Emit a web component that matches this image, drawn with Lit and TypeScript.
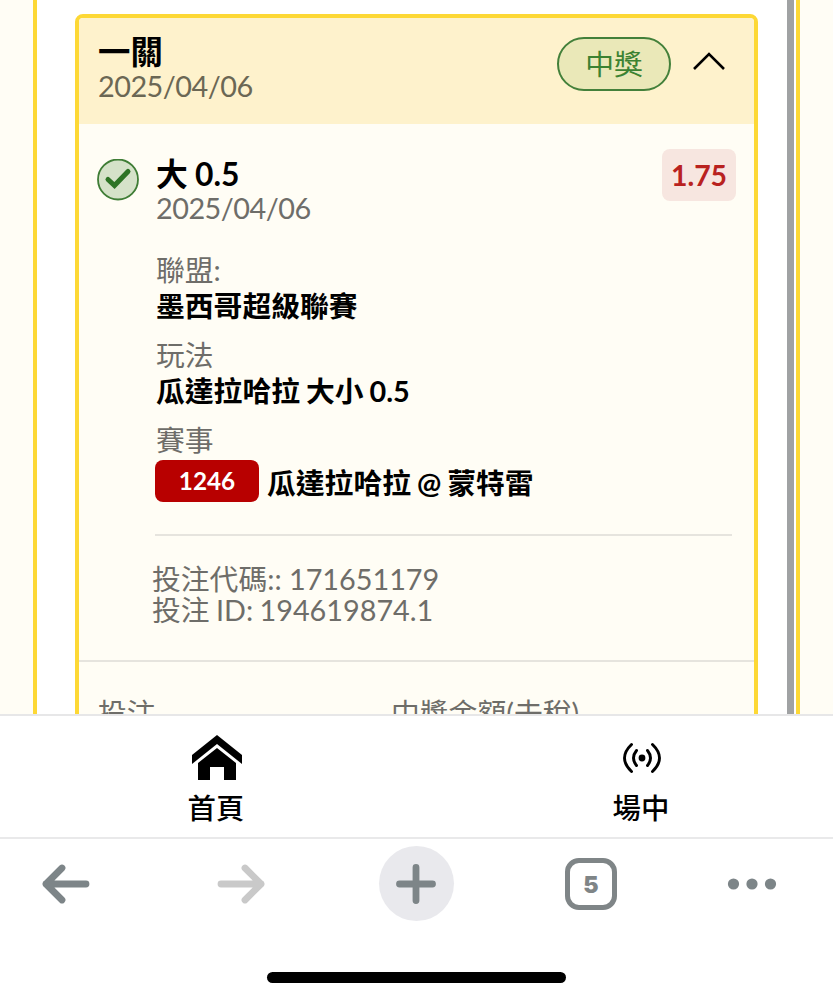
import { LitElement, html, css, svg, nothing } from 'lit';
import { customElement, property } from 'lit/decorators.js';

interface Detail {
  label: string;
  value: string;
  code?: string;
}

const details: Detail[] = [
  { label: '聯盟:', value: '墨西哥超級聯賽' },
  { label: '玩法', value: '瓜達拉哈拉 大小 0.5' },
  { label: '賽事', value: '瓜達拉哈拉 @ 蒙特雷', code: '1246' },
];

const homeIcon = svg`
  <path d="M26 0 51 20V29L26 9 1 29V20Z" />
  <path d="M26 13 45 28V45H33V32H19V45H7V28Z" />
`;

const liveIcon = svg`
  <circle cx="26" cy="23" r="3.4" />
  <g fill="none" stroke="#000" stroke-width="2.9" stroke-linecap="round">
    <path d="M20.5 15.5Q14.5 23 20.5 30.5M31.5 15.5Q37.5 23 31.5 30.5" />
    <path d="M15.5 9.5Q1.5 23 15.5 36.5M36.5 9.5Q50.5 23 36.5 36.5" />
  </g>
`;

@customElement('bet-card')
export class BetCard extends LitElement {
  static styles = css`
    :host {
      display: block;
      box-sizing: border-box;
      height: 760px;
      border: 4px solid #fdd835;
      border-radius: 8px;
      background: #fffdf5;
      overflow: hidden;
      font-size: 28.8px;
      line-height: 36px;
      color: #000;
    }

    header {
      display: flex;
      align-items: flex-start;
      box-sizing: border-box;
      height: 106px;
      padding: 16px 28px 0 19px;
      background: #fef2cc;
    }

    .grow {
      flex: 1;
    }

    .title {
      font-size: 32.4px;
      font-weight: 700;
      word-spacing: -0.5px;
    }

    .date {
      line-height: 32px;
      letter-spacing: -0.5px;
      color: #6b6754;
    }

    .leg .title {
      font-size: 31.8px;
    }

    .leg .date,
    .label,
    .codes,
    footer {
      color: #6e6d69;
    }

    .pill {
      box-sizing: border-box;
      width: 114px;
      height: 54px;
      margin-top: 3px;
      border: 2px solid #43803a;
      border-radius: 27px;
      background: #eae8b8;
      color: #3c8232;
      line-height: 50px;
      text-align: center;
    }

    .chevron {
      width: 34px;
      height: 20px;
      margin: 17px 0 0 21px;
    }

    .leg {
      display: flex;
      align-items: flex-start;
      padding: 32px 18px 0;
    }

    .check {
      width: 42px;
      height: 42px;
      margin: 3px 17px 0 0;
    }

    .odds {
      width: 74px;
      height: 52px;
      margin-top: -7px;
      border-radius: 8px;
      background: #f7e6e0;
      color: #b9221f;
      font-size: 28.4px;
      font-weight: 700;
      line-height: 52px;
      text-align: center;
    }

    .details {
      display: flex;
      flex-direction: column;
      gap: 13px;
      margin: 28px 22px 0 76px;
      padding-bottom: 32px;
      border-bottom: 2px solid #e6e4de;
    }

    .label,
    .value {
      padding-left: 1px;
    }

    .value {
      display: flex;
      align-items: center;
      font-weight: 700;
      word-spacing: -1px;
    }

    .code {
      width: 104px;
      margin: 2px 8px 0 -1px;
      border-radius: 8px;
      background: #b80000;
      color: #fff;
      font-size: 24.3px;
      line-height: 42px;
      text-align: center;
    }

    .code + .name {
      padding-top: 5px;
    }

    .codes {
      padding: 28px 0 34px 73px;
      line-height: 31.2px;
      border-bottom: 2px solid #e6e4de;
    }

    .bet-id {
      word-spacing: -1px;
    }

    footer {
      display: grid;
      grid-template-columns: 293px 1fr;
      padding: 33px 19px 0;
    }
  `;

  render() {
    return html`
      <header>
        <div class="grow">
          <div class="title">一關</div>
          <div class="date">2025/04/06</div>
        </div>
        <div class="pill">中獎</div>
        <svg class="chevron" viewBox="0 0 34 20">
          <path d="M2 18 17 3 32 18" fill="none" stroke="#000" stroke-width="2.6" />
        </svg>
      </header>
      <div class="leg">
        <svg class="check" viewBox="0 0 42 42">
          <circle cx="21" cy="20.5" r="20" fill="#d5e2c9" stroke="#3f7d36" stroke-width="1.8" />
          <path
            d="M11 20.5 17.5 26.5 31 12.5"
            fill="none"
            stroke="#2e7426"
            stroke-width="5"
            stroke-linecap="round"
          />
        </svg>
        <div class="grow">
          <div class="title">大 0.5</div>
          <div class="date">2025/04/06</div>
        </div>
        <div class="odds">1.75</div>
      </div>
      <div class="details">
        ${details.map(
          (item) => html`
            <div>
              <div class="label">${item.label}</div>
              <div class="value">
                ${item.code ? html`<span class="code">${item.code}</span>` : nothing}
                <span class="name">${item.value}</span>
              </div>
            </div>
          `
        )}
      </div>
      <div class="codes">
        <div>投注代碼:: 171651179</div>
        <div class="bet-id">投注 ID: 194619874.1</div>
      </div>
      <footer>
        <span>投注</span>
        <span>中獎金額(去稅)</span>
      </footer>
    `;
  }
}

@customElement('tab-item')
export class TabItem extends LitElement {
  static styles = css`
    :host {
      display: flex;
      flex-direction: column;
      align-items: center;
      font-size: 28.4px;
      line-height: 36px;
      font-weight: 500;
      color: #000;
    }

    svg {
      width: 52px;
      height: 46px;
      margin-bottom: 9px;
    }

    span {
      padding-right: 2px;
    }
  `;

  @property() label = '';
  @property({ attribute: false }) icon: unknown;

  render() {
    return html`
      <svg viewBox="0 0 52 46">${this.icon}</svg>
      <span>${this.label}</span>
    `;
  }
}

@customElement('browser-bar')
export class BrowserBar extends LitElement {
  static styles = css`
    :host {
      display: flex;
      flex-direction: column;
      align-items: center;
      justify-content: space-between;
      box-sizing: border-box;
      height: 163px;
      padding: 7px 0 17px;
      border-top: 2px solid #e9e9ea;
      background: #fff;
    }

    .buttons {
      display: flex;
      align-items: center;
      gap: 125.5px;
      box-sizing: border-box;
      width: 100%;
      height: 75px;
      padding-left: 40.5px;
    }

    svg {
      display: block;
      flex: none;
      fill: none;
      stroke: #7d8588;
      stroke-width: 6.8;
      stroke-linecap: round;
      stroke-linejoin: round;
    }

    .forward {
      stroke: #c9c9c9;
    }

    .plus {
      flex: none;
      display: grid;
      place-items: center;
      width: 75px;
      height: 75px;
      margin: 0 -13px;
      border-radius: 50%;
      background: #e9e9ed;
    }

    .tabs {
      flex: none;
      box-sizing: border-box;
      width: 52px;
      height: 52px;
      margin-left: -1px;
      border: 5.5px solid #7f8587;
      border-radius: 14px;
      color: #7f8587;
      font: 900 23px/44px Inter, sans-serif;
      text-align: center;
    }

    .more {
      margin-left: -16px;
      fill: #7d8588;
      stroke: none;
    }

    .home {
      width: 299px;
      height: 11px;
      border-radius: 6px;
      background: #000;
    }
  `;

  render() {
    return html`
      <div class="buttons">
        <svg width="50" height="42"><path d="M45 21H5M21 5 5 21 21 37" /></svg>
        <svg class="forward" width="50" height="42"><path d="M5 21H45M29 5 45 21 29 37" /></svg>
        <div class="plus">
          <svg width="42" height="42"><path d="M21 4.5V37.5M4.5 21H37.5" /></svg>
        </div>
        <div class="tabs">5</div>
        <svg class="more" width="50" height="42">
          <circle cx="6.5" cy="21" r="5.6" />
          <circle cx="25" cy="21" r="5.6" />
          <circle cx="43.5" cy="21" r="5.6" />
        </svg>
      </div>
      <div class="home"></div>
    `;
  }
}

@customElement('app-root')
export class AppRoot extends LitElement {
  static styles = css`
    :host {
      display: flex;
      flex-direction: column;
      height: 1000px;
      overflow: hidden;
      background: #fff;
      font-family: Lato, 'Noto Sans CJK TC', sans-serif;
    }

    main {
      display: flex;
      box-sizing: border-box;
      height: 714px;
      padding: 0 33px;
      background: #fffdf5;
      overflow: hidden;
    }

    .panel {
      flex: 1;
      display: flex;
      box-sizing: border-box;
      padding: 14px 2px 0 38px;
      border: solid #fdd835;
      border-width: 0 4px;
      background: #fff;
    }

    bet-card {
      width: 683px;
      flex: none;
    }

    .scrollbar {
      width: 7px;
      margin: -14px 0 0 29px;
      background: #a0a2a3;
    }

    nav {
      display: grid;
      grid-template-columns: 425px 425px;
      box-sizing: border-box;
      height: 123px;
      padding: 19px 0 0 4.5px;
      border-top: 2px solid #e7e7e8;
      background: #fff;
    }
  `;

  render() {
    return html`
      <main>
        <div class="panel">
          <bet-card></bet-card>
          <div class="scrollbar"></div>
        </div>
      </main>
      <nav>
        <tab-item label="首頁" .icon=${homeIcon}></tab-item>
        <tab-item label="場中" .icon=${liveIcon}></tab-item>
      </nav>
      <browser-bar></browser-bar>
    `;
  }
}

declare global {
  interface HTMLElementTagNameMap {
    'app-root': AppRoot;
    'bet-card': BetCard;
    'tab-item': TabItem;
    'browser-bar': BrowserBar;
  }
}
